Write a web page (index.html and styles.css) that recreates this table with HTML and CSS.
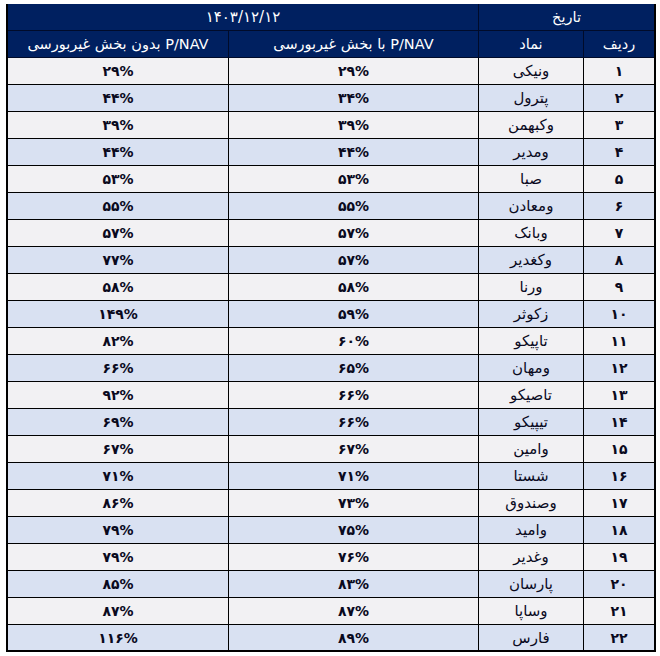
FILE: index.html
```html
<!DOCTYPE html>
<html lang="fa" dir="rtl">
<head>
<meta charset="utf-8">
<title>P/NAV</title>
<link rel="stylesheet" href="styles.css">
</head>
<body>
<table class="grid">
  <colgroup>
    <col class="c-rank">
    <col class="c-sym">
    <col class="c-with">
    <col class="c-without">
  </colgroup>
  <thead>
    <tr class="hrow">
      <th colspan="2">تاریخ</th>
      <th colspan="2" class="last date">۱۴۰۳/۱۲/۱۲</th>
    </tr>
    <tr class="hrow">
      <th>ردیف</th>
      <th>نماد</th>
      <th>P/NAV با بخش غیربورسی</th>
      <th class="last">P/NAV بدون بخش غیربورسی</th>
    </tr>
  </thead>
  <tbody>
    <tr><td class="num">۱</td><td class="sym">ونیکی</td><td class="num">۲۹%</td><td class="num last">۲۹%</td></tr>
    <tr><td class="num">۲</td><td class="sym">پترول</td><td class="num">۳۴%</td><td class="num last">۴۴%</td></tr>
    <tr><td class="num">۳</td><td class="sym">وکبهمن</td><td class="num">۳۹%</td><td class="num last">۳۹%</td></tr>
    <tr><td class="num">۴</td><td class="sym">ومدیر</td><td class="num">۴۴%</td><td class="num last">۴۴%</td></tr>
    <tr><td class="num">۵</td><td class="sym">صبا</td><td class="num">۵۳%</td><td class="num last">۵۳%</td></tr>
    <tr><td class="num">۶</td><td class="sym">ومعادن</td><td class="num">۵۵%</td><td class="num last">۵۵%</td></tr>
    <tr><td class="num">۷</td><td class="sym">وبانک</td><td class="num">۵۷%</td><td class="num last">۵۷%</td></tr>
    <tr><td class="num">۸</td><td class="sym">وکغدیر</td><td class="num">۵۷%</td><td class="num last">۷۷%</td></tr>
    <tr><td class="num">۹</td><td class="sym">ورنا</td><td class="num">۵۸%</td><td class="num last">۵۸%</td></tr>
    <tr><td class="num">۱۰</td><td class="sym">زکوثر</td><td class="num">۵۹%</td><td class="num last">۱۴۹%</td></tr>
    <tr><td class="num">۱۱</td><td class="sym">تاپیکو</td><td class="num">۶۰%</td><td class="num last">۸۲%</td></tr>
    <tr><td class="num">۱۲</td><td class="sym">ومهان</td><td class="num">۶۵%</td><td class="num last">۶۶%</td></tr>
    <tr><td class="num">۱۳</td><td class="sym">تاصیکو</td><td class="num">۶۶%</td><td class="num last">۹۲%</td></tr>
    <tr><td class="num">۱۴</td><td class="sym">تیپیکو</td><td class="num">۶۶%</td><td class="num last">۶۹%</td></tr>
    <tr><td class="num">۱۵</td><td class="sym">وامین</td><td class="num">۶۷%</td><td class="num last">۶۷%</td></tr>
    <tr><td class="num">۱۶</td><td class="sym">شستا</td><td class="num">۷۱%</td><td class="num last">۷۱%</td></tr>
    <tr><td class="num">۱۷</td><td class="sym">وصندوق</td><td class="num">۷۳%</td><td class="num last">۸۶%</td></tr>
    <tr><td class="num">۱۸</td><td class="sym">وامید</td><td class="num">۷۵%</td><td class="num last">۷۹%</td></tr>
    <tr><td class="num">۱۹</td><td class="sym">وغدیر</td><td class="num">۷۶%</td><td class="num last">۷۹%</td></tr>
    <tr><td class="num">۲۰</td><td class="sym">پارسان</td><td class="num">۸۳%</td><td class="num last">۸۵%</td></tr>
    <tr><td class="num">۲۱</td><td class="sym">وساپا</td><td class="num">۸۷%</td><td class="num last">۸۷%</td></tr>
    <tr class="final"><td class="num">۲۲</td><td class="sym">فارس</td><td class="num">۸۹%</td><td class="num last">۱۱۶%</td></tr>
  </tbody>
</table>
</body>
</html>
```

FILE: styles.css
```css
html, body {
  margin: 0;
  padding: 0;
  background: #ffffff;
}

body {
  padding: 4px 4px 0 6px;
  font-family: "DejaVu Sans", "Noto Sans", sans-serif;
}

.grid {
  width: 650px;
  table-layout: fixed;
  border-collapse: separate;
  border-spacing: 0;
  border-left: 2px solid #000;
  border-right: 2px solid #000;
  border-bottom: 2px solid #000;
  border-top: 0;
}

.c-rank { width: 71px; }
.c-sym { width: 105px; }
.c-with { width: 250px; }
.c-without { width: 220px; }

.grid th,
.grid td {
  padding: 0;
  height: 26px;
  line-height: 18px;
  text-align: center;
  vertical-align: middle;
  border-bottom: 1px solid #000;
  border-left: 1px solid #000;
  white-space: nowrap;
  overflow: hidden;
}

.grid .last {
  border-left: 0;
}

.grid th {
  background: #002060;
  color: #ffffff;
  font-size: 14.5px;
  font-weight: normal;
  border-bottom-color: #000b2a;
  border-left-color: #000b2a;
}

.grid th.date {
  font-size: 15px;
}

.grid td {
  font-size: 14px;
  color: #0a0a1e;
}

.grid td.num {
  font-weight: bold;
}

.grid td.sym {
  font-size: 15px;
  font-weight: normal;
}

.grid tbody tr:nth-child(odd) td {
  background: #f2f1f3;
}

.grid tbody tr:nth-child(even) td {
  background: #d9e1f2;
}

.grid tr.final td {
  border-bottom: 0;
  height: 25px;
}
```
